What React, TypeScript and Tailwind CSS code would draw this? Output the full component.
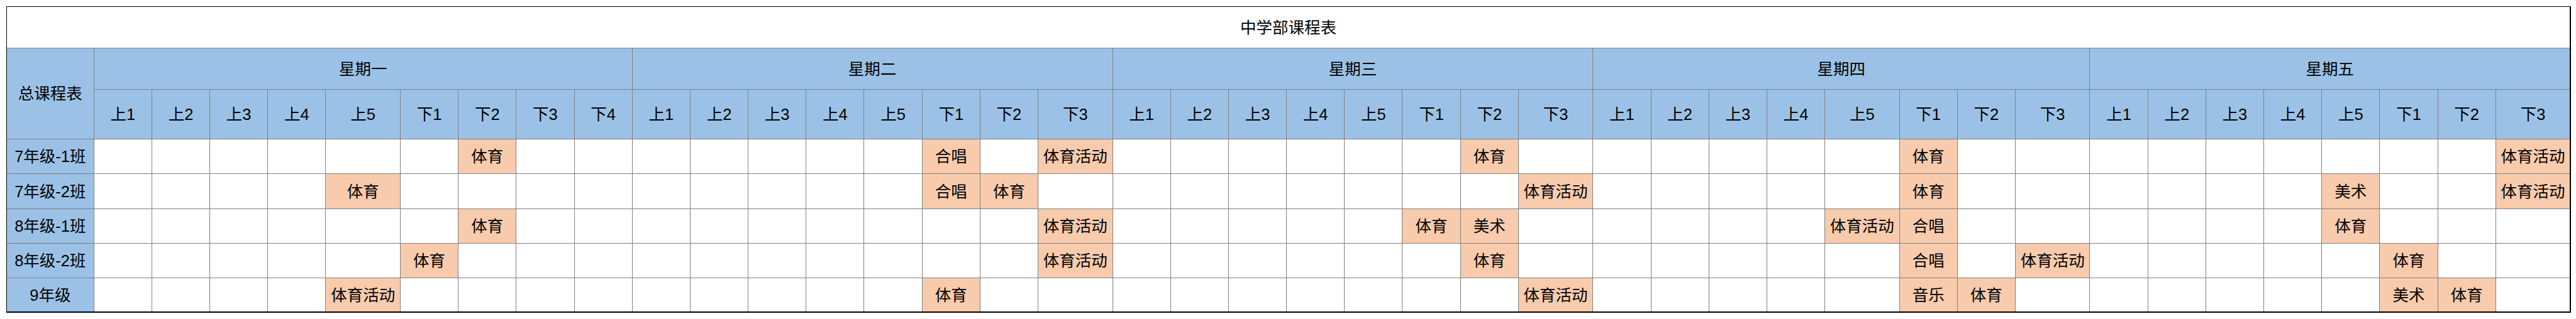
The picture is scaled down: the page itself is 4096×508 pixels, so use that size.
import { clsx } from "clsx"

const DAYS = [
  { name: "星期一", periods: ["上1", "上2", "上3", "上4", "上5", "下1", "下2", "下3", "下4"] },
  { name: "星期二", periods: ["上1", "上2", "上3", "上4", "上5", "下1", "下2", "下3"] },
  { name: "星期三", periods: ["上1", "上2", "上3", "上4", "上5", "下1", "下2", "下3"] },
  { name: "星期四", periods: ["上1", "上2", "上3", "上4", "上5", "下1", "下2", "下3"] },
  { name: "星期五", periods: ["上1", "上2", "上3", "上4", "上5", "下1", "下2", "下3"] },
]

// lessons keyed "dayIndex-period"
const CLASSES: { name: string; lessons: Record<string, string> }[] = [
  {
    name: "7年级-1班",
    lessons: { "0-下2": "体育", "1-下1": "合唱", "1-下3": "体育活动", "2-下2": "体育", "3-下1": "体育", "4-下3": "体育活动" },
  },
  {
    name: "7年级-2班",
    lessons: { "0-上5": "体育", "1-下1": "合唱", "1-下2": "体育", "2-下3": "体育活动", "3-下1": "体育", "4-上5": "美术", "4-下3": "体育活动" },
  },
  {
    name: "8年级-1班",
    lessons: { "0-下2": "体育", "1-下3": "体育活动", "2-下1": "体育", "2-下2": "美术", "3-上5": "体育活动", "3-下1": "合唱", "4-上5": "体育" },
  },
  {
    name: "8年级-2班",
    lessons: { "0-下1": "体育", "1-下3": "体育活动", "2-下2": "体育", "3-下1": "合唱", "3-下3": "体育活动", "4-下1": "体育" },
  },
  {
    name: "9年级",
    lessons: { "0-上5": "体育活动", "1-下1": "体育", "2-下3": "体育活动", "3-下1": "音乐", "3-下2": "体育", "4-下1": "美术", "4-下2": "体育" },
  },
]

function Cell({ children, className }: { children?: React.ReactNode; className?: string }) {
  return (
    <div className={clsx("flex items-center justify-center whitespace-nowrap pt-[2px]", className)}>
      {children}
    </div>
  )
}

export default function App() {
  return (
    <div className="w-[4096px] h-[508px] bg-white pt-[10px] pl-[10px] font-[family-name:'Liberation_Sans','Noto_Sans_CJK_SC',sans-serif] text-[25.5px] leading-none text-black">
      <div className="grid w-max grid-cols-[137.7px_repeat(4,91.2px)_117.5px_repeat(11,91.2px)_117.5px_repeat(7,91.2px)_117.5px_repeat(4,91.2px)_117.5px_repeat(2,91.2px)_117.5px_repeat(7,91.2px)_117.5px] grid-rows-[65px_65px_78px_54.3px_54.3px_54.3px_54.3px_52.5px] gap-px bg-[#808080] border-t border-l border-r-2 border-b-2 border-black">
        <Cell className="col-span-full bg-white">中学部课程表</Cell>

        <Cell className="row-span-2 bg-[#9BC2E6]">总课程表</Cell>
        {DAYS.map((d) => (
          <Cell key={d.name} className={clsx("bg-[#9BC2E6]", d.periods.length === 9 ? "col-span-9" : "col-span-8")}>
            {d.name}
          </Cell>
        ))}

        {DAYS.map((d, di) =>
          d.periods.map((p) => (
            <Cell key={`${di}-${p}`} className="bg-[#9BC2E6]">
              {p}
            </Cell>
          ))
        )}

        {CLASSES.map((c) => (
          <div key={c.name} className="contents">
            <Cell className="bg-[#9BC2E6]">{c.name}</Cell>
            {DAYS.map((d, di) =>
              d.periods.map((p) => {
                const subject = c.lessons[`${di}-${p}`]
                return (
                  <Cell key={`${di}-${p}`} className={subject ? "bg-[#F8CBAD]" : "bg-white"}>
                    {subject}
                  </Cell>
                )
              })
            )}
          </div>
        ))}
      </div>
    </div>
  )
}
